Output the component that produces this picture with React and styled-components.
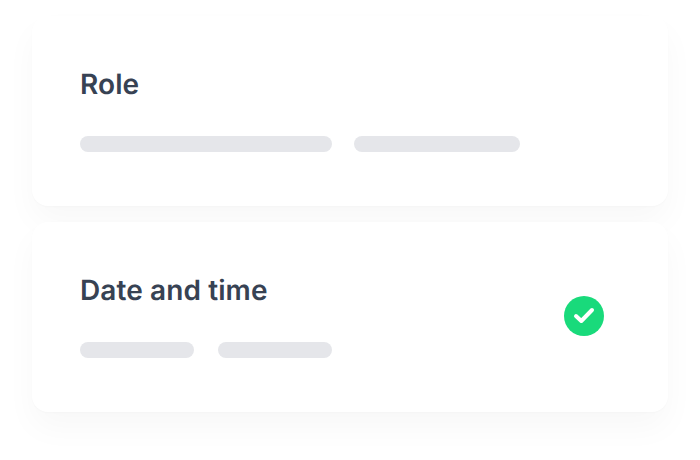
import React from "react";
import styled, { createGlobalStyle } from "styled-components";

const steps = [
  { title: "Role", bars: [252, 166], gap: 22, done: false },
  { title: "Date and time", bars: [114, 114], gap: 24, done: true }
];

export default function App() {
  return (
    <>
      <GlobalStyle />
      <StepList>
        {steps.map(({ title, bars, gap, done }) => (
          <StepCard key={title}>
            <div>
              <StepTitle>{title}</StepTitle>
              <BarRow $gap={gap}>
                {bars.map((width, i) => (
                  <Bar key={i} $width={width} />
                ))}
              </BarRow>
            </div>
            {done && (
              <DoneBadge>
                <svg width="40" height="40" viewBox="0 0 40 40" fill="none">
                  <path
                    d="M12 20L17.3 25L28 14"
                    stroke="#fff"
                    strokeWidth="4"
                    strokeLinecap="round"
                    strokeLinejoin="round"
                  />
                </svg>
              </DoneBadge>
            )}
          </StepCard>
        ))}
      </StepList>
    </>
  );
}

const GlobalStyle = createGlobalStyle`
  body {
    margin: 0;
    background: #fff;
    overflow: hidden;
  }
`;

const StepList = styled.div`
  box-sizing: border-box;
  display: flex;
  flex-direction: column;
  gap: 16px;
  height: 460px;
  padding: 16px 32px 48px;
`;

const StepCard = styled.section`
  box-sizing: border-box;
  display: flex;
  align-items: flex-start;
  justify-content: space-between;
  height: 190px;
  padding: 51px 64px 0 48px;
  background: #fff;
  border-radius: 16px;
  box-shadow: 0 16px 32px rgba(0, 0, 0, 0.03), 0 1px 2px rgba(0, 0, 0, 0.02);
`;

const StepTitle = styled.h2`
  margin: 0 0 35px;
  color: #374253;
  font-family: Inter, sans-serif;
  font-size: 28px;
  font-weight: 600;
  letter-spacing: 0.1px;
  line-height: 34px;
  text-rendering: geometricPrecision;
`;

const BarRow = styled.div`
  display: flex;
  gap: ${({ $gap }) => $gap}px;
`;

const Bar = styled.div`
  width: ${({ $width }) => $width}px;
  height: 16px;
  background: #e5e6ea;
  border-radius: 8px;
`;

const DoneBadge = styled.div`
  width: 40px;
  height: 40px;
  margin-top: 23px;
  background: #19da7b;
  border-radius: 50%;
`;
